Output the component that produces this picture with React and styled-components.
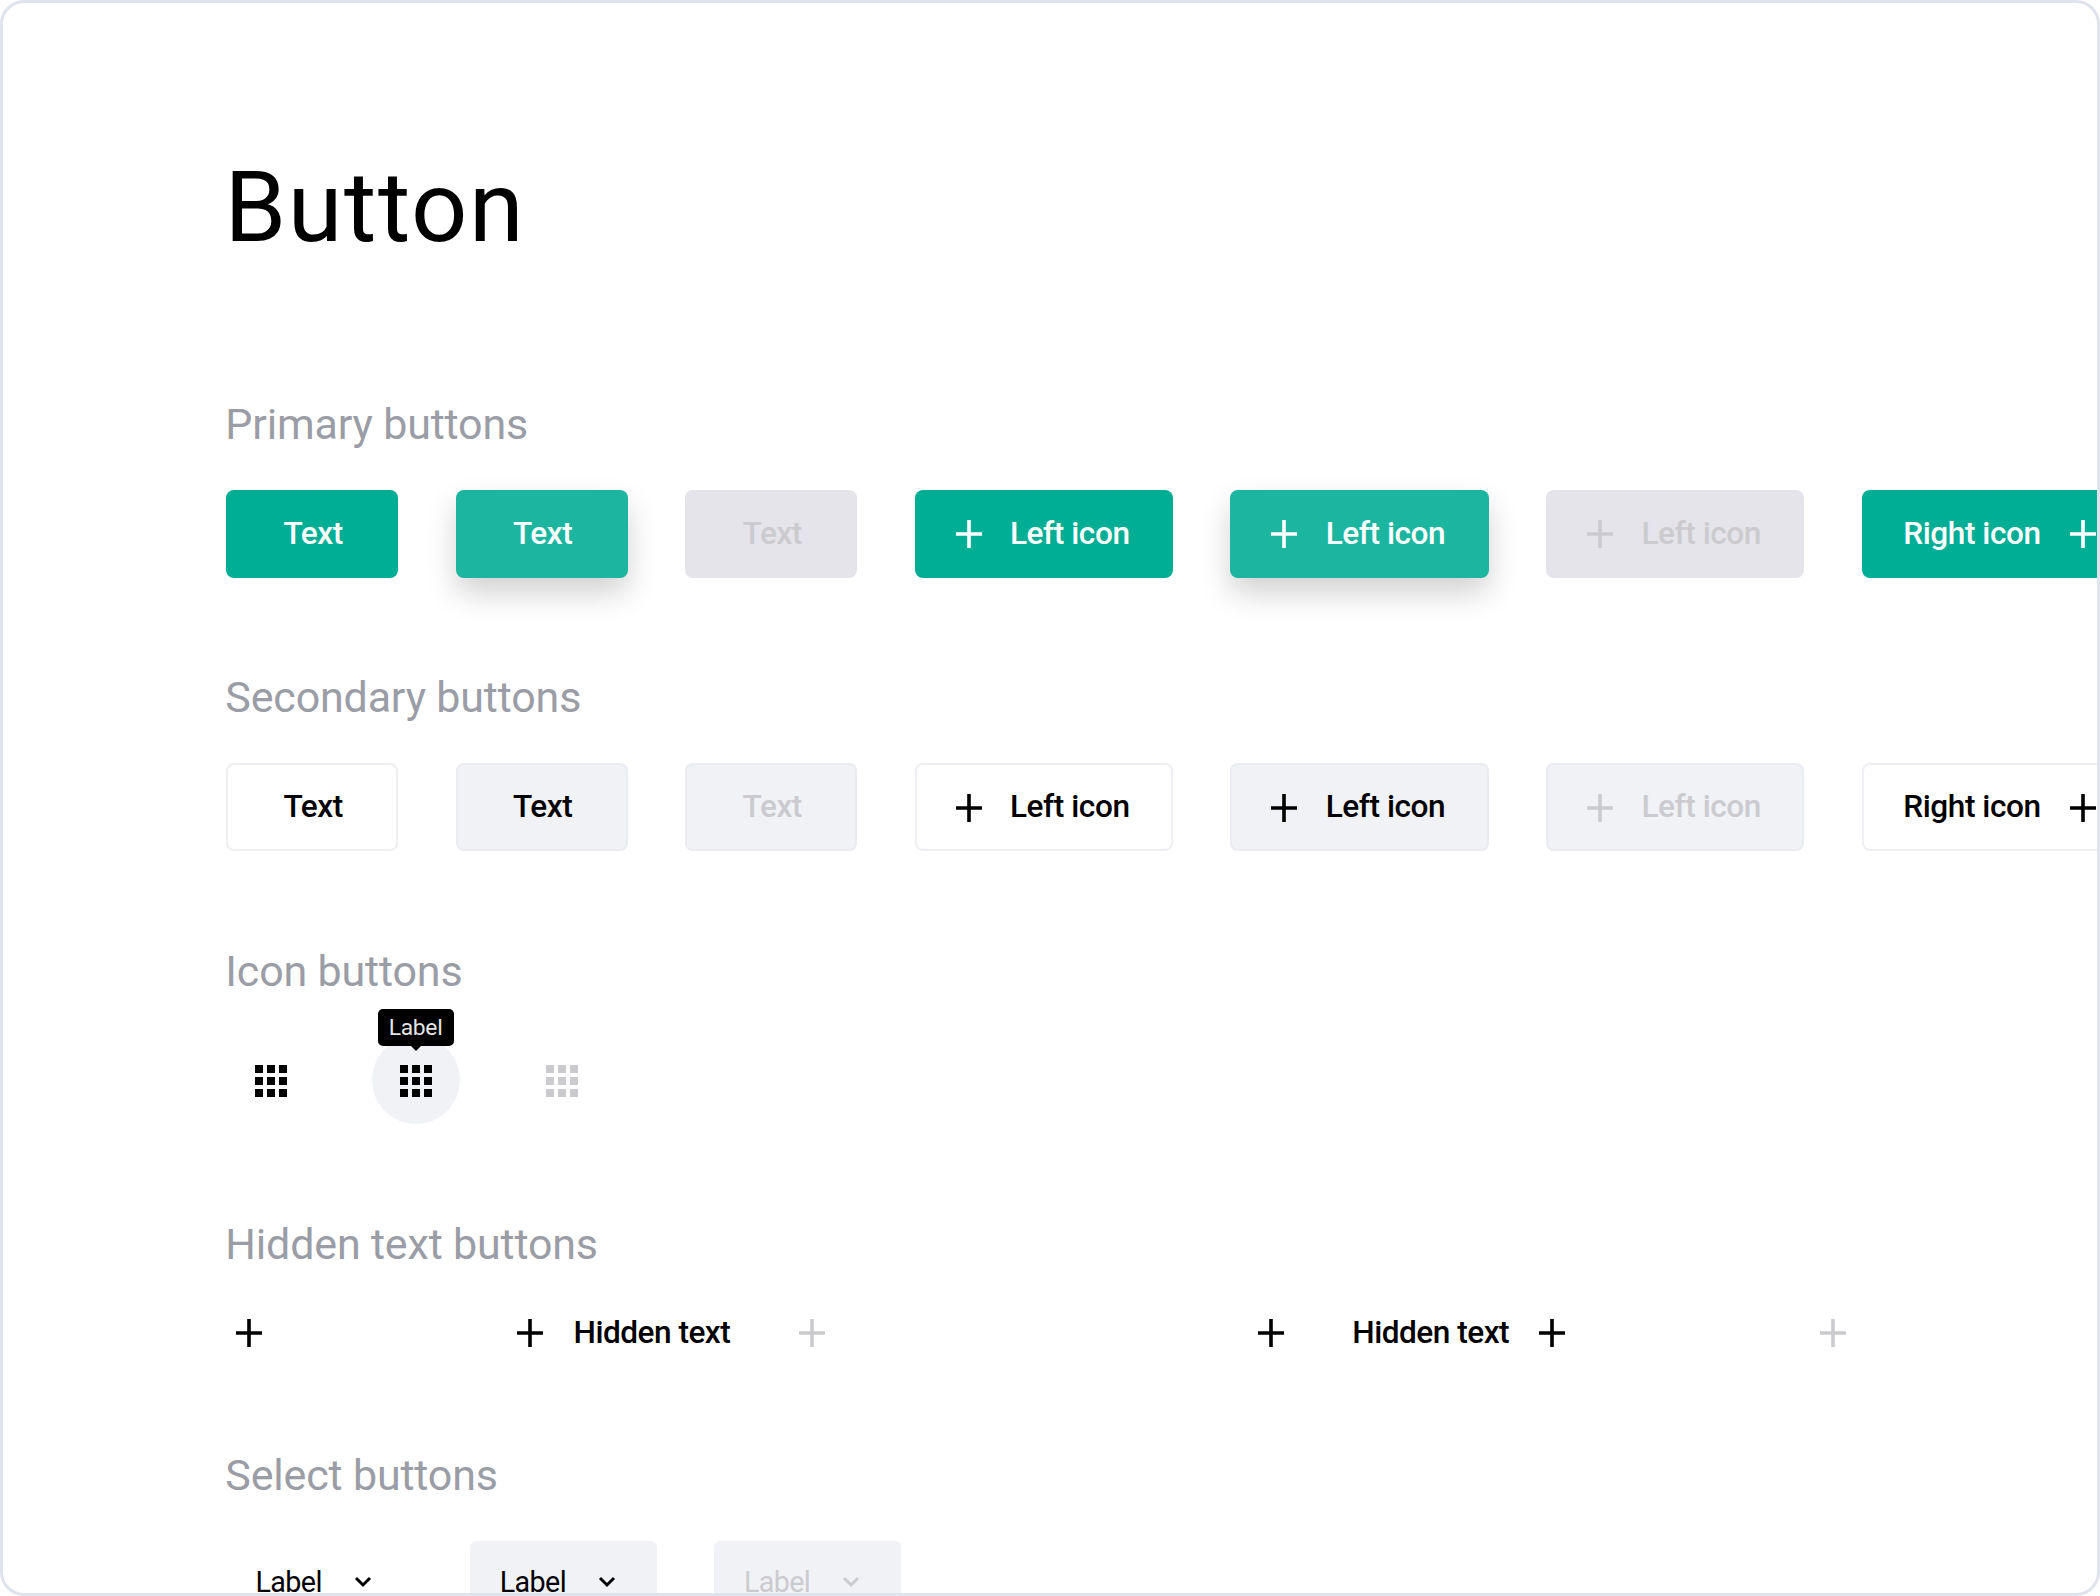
import React from "react";
import styled, { createGlobalStyle, css } from "styled-components";

//components

function PlusIcon() {
  return (
    <PlusSvg width="26" height="28" viewBox="0 0 26 28">
      <path d="M13 0v28M0 14h26" stroke="currentColor" strokeWidth="3.6" fill="none" />
    </PlusSvg>
  );
}

function AppsIcon() {
  return (
    <AppsSvg width="48" height="48" viewBox="0 0 24 24" fill="currentColor">
      <path d="M4 8h4V4H4v4zm6 12h4v-4h-4v4zm-6 0h4v-4H4v4zm0-6h4v-4H4v4zm6 0h4v-4h-4v4zm6-10v4h4V4h-4zm-6 4h4V4h-4v4zm6 6h4v-4h-4v4zm0 6h4v-4h-4v4z" />
    </AppsSvg>
  );
}

function ChevronIcon() {
  return (
    <svg width="18" height="12" viewBox="0 0 18 12" fill="none">
      <path d="M2 2l7 7 7-7" stroke="currentColor" strokeWidth="3" />
    </svg>
  );
}

function ButtonRow({ kind }) {
  const states = ["default", "hover", "disabled"];
  return (
    <Row>
      {states.map((state) => (
        <Button key={state} $kind={kind} $state={state}>
          Text
        </Button>
      ))}
      {states.map((state) => (
        <Button key={state} $kind={kind} $state={state} $wide>
          <PlusIcon />
          Left icon
        </Button>
      ))}
      <Button $kind={kind} $state="default" $wide $iconRight>
        Right icon
        <PlusIcon />
      </Button>
    </Row>
  );
}

function App() {
  return (
    <Frame>
      <GlobalStyle />
      <Title>Button</Title>

      <Section>
        <Heading>Primary buttons</Heading>
        <ButtonRow kind="primary" />
      </Section>

      <Section>
        <Heading>Secondary buttons</Heading>
        <ButtonRow kind="secondary" />
      </Section>

      <Section>
        <Heading>Icon buttons</Heading>
        <IconRow>
          <IconButton>
            <AppsIcon />
          </IconButton>
          <IconButton $state="hover">
            <AppsIcon />
            <Tooltip>Label</Tooltip>
          </IconButton>
          <IconButton $state="disabled">
            <AppsIcon />
          </IconButton>
        </IconRow>
      </Section>

      <Section $height={231.3}>
        <Heading>Hidden text buttons</Heading>
        <HiddenRow>
          <HiddenButton>
            <PlusIcon />
          </HiddenButton>
          <HiddenButton>
            <PlusIcon />
            Hidden text
          </HiddenButton>
          <HiddenButton $state="disabled" $last>
            <PlusIcon />
          </HiddenButton>
          <HiddenButton $end>
            <PlusIcon />
          </HiddenButton>
          <HiddenButton $end>
            Hidden text
            <PlusIcon />
          </HiddenButton>
          <HiddenButton $end $state="disabled">
            <PlusIcon />
          </HiddenButton>
        </HiddenRow>
      </Section>

      <Section>
        <Heading>Select buttons</Heading>
        <SelectRow>
          <SelectButton>
            Label
            <ChevronIcon />
          </SelectButton>
          <SelectButton $state="hover">
            Label
            <ChevronIcon />
          </SelectButton>
          <SelectButton $state="disabled">
            Label
            <ChevronIcon />
          </SelectButton>
        </SelectRow>
      </Section>
    </Frame>
  );
}

const GlobalStyle = createGlobalStyle`
  * {
    box-sizing: border-box;
  }
  body {
    margin: 0;
    background: #ffffff;
    overflow: hidden;
  }
  button {
    margin: 0;
    padding: 0;
    border: 0;
    background: none;
    font-family: inherit;
    flex-shrink: 0;
  }
  svg {
    display: block;
    flex-shrink: 0;
  }
`;

const Frame = styled.main`
  width: 2100px;
  height: 1596px;
  padding: 144px 0 0 223px;
  border: 3px solid #dfe3ed;
  border-radius: 24px;
  overflow: hidden;
  background: #ffffff;
  font-family: Roboto, "Liberation Sans", sans-serif;
`;

const Title = styled.h1`
  height: 252px;
  margin: 0 0 0 -1.5px;
  font-size: 99px;
  font-weight: 400;
  line-height: 121px;
  letter-spacing: 1.6px;
  color: #000000;
`;

const Section = styled.section`
  height: ${(props) => props.$height || 273.3}px;
`;

const Heading = styled.h2`
  margin: 0 0 0 -0.7px;
  font-size: 43px;
  font-weight: 400;
  line-height: 50px;
  letter-spacing: -0.17px;
  color: #9a9da6;
`;

const Row = styled.div`
  display: flex;
  gap: 57.4px;
  margin-top: 40.8px;
`;

const kinds = {
  primary: {
    default: css`
      background: #00ae95;
      color: #ffffff;
    `,
    hover: css`
      background: #1bb5a0;
      color: #ffffff;
      box-shadow: 0 15px 30px rgba(0, 0, 0, 0.18);
    `,
    disabled: css`
      background: #e5e4ea;
      color: #cbcbcf;
    `,
  },
  secondary: {
    default: css`
      background: #ffffff;
      color: #000000;
      box-shadow: inset 0 0 0 2px #efeff3;
    `,
    hover: css`
      background: #f1f2f6;
      color: #000000;
      box-shadow: inset 0 0 0 2px #ebecf1;
    `,
    disabled: css`
      background: #f1f2f6;
      color: #cbcbcf;
      box-shadow: inset 0 0 0 2px #ebecf1;
    `,
  },
};

const Button = styled.button`
  display: flex;
  align-items: center;
  justify-content: ${(props) => (props.$wide ? "space-between" : "center")};
  width: ${(props) => (props.$wide ? 258.3 : 172.2)}px;
  height: 88px;
  border-radius: 8px;
  font-size: 31.6px;
  font-weight: 500;
  line-height: 38px;
  letter-spacing: -0.45px;
  white-space: nowrap;
  ${(props) => kinds[props.$kind][props.$state]}
  padding: ${(props) =>
    props.$wide
      ? props.$iconRight
        ? "0 24px 0 41.5px"
        : "0 43.5px 0 41px"
      : "0 0 0 2px"};
`;

const PlusSvg = styled.svg`
  margin-top: 1px;
`;

const AppsSvg = styled.svg`
  margin: 2px 0 0 1px;
`;

const IconRow = styled.div`
  display: flex;
  gap: 57.6px;
  margin-top: 40.3px;
`;

const stateColor = (props) => (props.$state === "disabled" ? "#cbcbcf" : "#000000");

const IconButton = styled.button`
  position: relative;
  display: flex;
  align-items: center;
  justify-content: center;
  width: 88px;
  height: 88px;
  border-radius: 50%;
  color: ${stateColor};
  ${(props) => props.$state === "hover" && "background: #f1f2f6;"}
`;

const Tooltip = styled.span`
  position: absolute;
  top: -27px;
  left: 50%;
  width: 76px;
  height: 37px;
  margin-left: -38px;
  border-radius: 5px;
  background: #000000;
  color: #e4e4e4;
  font-size: 22.8px;
  line-height: 37px;
  letter-spacing: -0.3px;
  text-align: center;

  &::after {
    content: "";
    position: absolute;
    top: 100%;
    left: 50%;
    margin-left: -5px;
    border: 5px solid transparent;
    border-top-color: #000000;
    border-bottom: 0;
  }
`;

const HiddenRow = styled.div`
  display: flex;
  margin-top: 39.3px;
`;

const HiddenButton = styled.button`
  display: flex;
  align-items: center;
  justify-content: ${(props) => (props.$end ? "flex-end" : "flex-start")};
  gap: 30px;
  width: ${(props) => (props.$last ? 214.3 : 281.2)}px;
  height: 48px;
  padding-left: 10.3px;
  font-size: 31.6px;
  font-weight: 500;
  letter-spacing: -0.5px;
  color: ${stateColor};
`;

const SelectRow = styled.div`
  display: flex;
  gap: 57.2px;
  margin-top: 41.3px;
`;

const SelectButton = styled.button`
  display: flex;
  align-items: center;
  justify-content: space-between;
  width: 187px;
  height: 82px;
  padding: 0 41.5px 0 29.5px;
  border-radius: 6px;
  font-size: 28.7px;
  font-weight: 400;
  letter-spacing: -0.6px;
  color: ${stateColor};
  ${(props) => props.$state && "background: #f1f2f6;"}
`;

export default App;
